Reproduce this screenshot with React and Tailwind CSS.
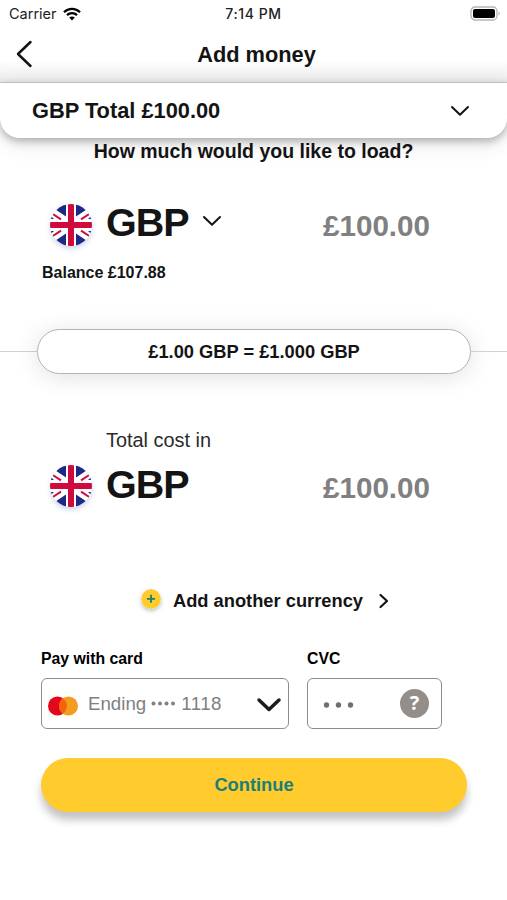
import React, { useState } from 'react';

const Chevron = ({ className, d, viewBox, width = 2 }) => (
    <svg className={className} viewBox={viewBox} fill="none" stroke="currentColor" strokeWidth={width} strokeLinecap="round" strokeLinejoin="round">
        <path d={d} />
    </svg>
);

const Flag = () => (
    <div className="h-[42px] w-[42px] shrink-0 overflow-hidden rounded-full shadow-[0_3px_5px_rgba(40,80,160,0.22)]">
        <svg className="block h-full w-full" viewBox="0 0 42 42">
            <rect width="42" height="42" fill="#fff" />
            <g fill="#1c2a86">
                <path d="M16 0V12.500L5.500 5.500L9 0ZM26 0V12.500L36.500 5.500L33 0Z" />
                <path d="M16 42V29.500L5.500 36.500L9 42ZM26 42V29.500L36.500 36.500L33 42Z" />
                <path d="M0 13.200L1.500 12.800L4 15H0ZM42 13.200L40.500 12.800L38 15H42Z" />
                <path d="M0 28.800L1.500 29.200L4 27H0ZM42 28.800L40.500 29.200L38 27H42Z" />
            </g>
            <g stroke="#cf0a3c" strokeWidth="2">
                <path d="M2 9.500L11 15.300M40 9.500L31 15.300M2 32.500L11 26.700M40 32.500L31 26.700" />
            </g>
            <path d="M18 0H24V18H42V24H24V42H18V24H0V18H18Z" fill="#cf0a3c" />
        </svg>
    </div>
);

const StatusBar = () => (
    <div className="grid h-7 grid-cols-3 items-center pr-[6px] pb-px pl-[9px] font-['Inter',sans-serif] text-[14.500px] text-[#222]">
        <div className="flex items-center gap-[6px]">
            <span className="font-normal">Carrier</span>
            <svg className="h-[14px] w-[18px] text-black" viewBox="0 0 18 14" fill="none" stroke="currentColor" strokeWidth="2.300">
                <path d="M1 5.200C5.500 0.700 12.500 0.700 17 5.200" />
                <path d="M4 8.200C6.800 5.500 11.200 5.500 14 8.200" />
                <path d="M9 13.500L6.200 10.600C7.800 9.200 10.200 9.200 11.800 10.600Z" fill="currentColor" stroke="none" />
            </svg>
        </div>
        <span className="pb-px pr-[3px] text-center text-[14px] font-medium tracking-[0.6px] whitespace-nowrap">7:14 PM</span>
        <svg className="h-[15px] w-[31px] justify-self-end" viewBox="0 0 31 15">
            <rect x="1" y="1" width="26" height="13" rx="4" fill="#fff" stroke="#b5b5b5" strokeWidth="1.300" />
            <rect x="3" y="3" width="22" height="9" rx="2" fill="#000" />
            <path d="M28.500 5.500C30.300 6.300 30.300 8.700 28.500 9.500Z" fill="#b5b5b5" />
        </svg>
    </div>
);

export default function AddMoney() {
    const [currency] = useState('GBP');
    const [amount] = useState('£100.00');

    return (
        <div className="h-[900px] w-[507px] overflow-hidden bg-white font-['Liberation_Sans',Arial,sans-serif] font-bold whitespace-nowrap text-[#141414]">
            <StatusBar />

            {/* Header */}
            <header className="grid h-[55px] grid-cols-[80px_1fr_74px] items-center border-b border-[#cfcecb] bg-linear-to-b from-white from-60% to-[#ebebeb]">
                <Chevron className="mb-[3px] ml-[15px] h-[28px] w-[18px]" viewBox="0 0 18 28" d="M15.500 2L3 14L15.500 26" width={2.500} />
                <h1 className="pb-px text-center text-[21.800px] leading-7">Add money</h1>
            </header>

            {/* Total */}
            <div className="relative flex h-[55px] items-center justify-between rounded-b-[20px] bg-white pr-[37px] pl-[32px] shadow-[0_3px_8px_rgba(0,0,0,0.28),0_6px_22px_rgba(0,0,0,0.10)]">
                <span className="pt-px text-[21.800px]">{currency} Total {amount}</span>
                <Chevron className="h-[12px] w-[20px]" viewBox="0 0 20 12" d="M2 2L10 9.800L18 2" />
            </div>

            <h2 className="h-[27px] text-center text-[19.500px] leading-[27px]">How much would you like to load?</h2>

            {/* Load amount */}
            <div className="mt-[35px] flex h-[50px] items-center pr-[77px] pl-[50px]">
                <Flag />
                <span className="ml-[14px] pb-[4px] text-[39.500px] leading-none tracking-[-1px]">{currency}</span>
                <Chevron className="mb-[9px] ml-[13px] h-[12px] w-[20px]" viewBox="0 0 20 12" d="M2 2L10 9.800L18 2" />
                <span className="ml-auto pt-[2px] text-[29.600px] leading-none text-[#808080]">{amount}</span>
            </div>
            <p className="mt-[11px] pl-[42px] text-[16px] leading-6">Balance £107.88</p>

            {/* Exchange rate */}
            <div className="mt-[44px] flex items-center">
                <div className="h-px w-[37px] bg-[#d2d2d2]" />
                <div className="flex h-[45px] w-[434px] items-center justify-center rounded-full border border-[#b5b5b5] bg-white text-[18.300px] shadow-[0_3px_24px_rgba(0,0,0,0.12)]">
                    £1.00 GBP = £1.000 GBP
                </div>
                <div className="h-px flex-1 bg-[#d2d2d2]" />
            </div>

            {/* Total cost */}
            <p className="mt-[54px] pl-[106px] text-[19.900px] leading-6 font-normal text-[#2b2b2b]">Total cost in</p>
            <div className="mt-[9px] flex h-[50px] items-center pr-[77px] pl-[50px]">
                <Flag />
                <span className="ml-[14px] pb-[2px] text-[39.500px] leading-none tracking-[-1px]">{currency}</span>
                <span className="ml-auto pt-[4px] text-[29.600px] leading-none text-[#808080]">{amount}</span>
            </div>

            <button className="mt-[78px] flex h-[24px] items-center pl-[141px]">
                <svg className="mb-[4px] h-[20px] w-[20px] rounded-full shadow-[0_2px_4px_rgba(0,0,0,0.25)]" viewBox="0 0 20 20">
                    <circle cx="10" cy="10" r="10" fill="#ffcb2d" />
                    <path d="M10 5.800V13.800M6 9.800H14" stroke="#16807a" strokeWidth="1.800" />
                </svg>
                <span className="ml-[12px] text-[18.300px]">Add another currency</span>
                <Chevron className="ml-[15px] h-[16px] w-[11px]" viewBox="0 0 11 16" d="M2.500 2L9 8L2.500 14" width={2.200} />
            </button>

            {/* Card */}
            <div className="mt-[34px] flex gap-[18px] pl-[41px] text-black">
                <div className="w-[248px]">
                    <label className="block text-[15.800px] leading-6">Pay with card</label>
                    <div className="mt-[7px] flex h-[51px] items-center rounded-[6px] border-[1.500px] border-[#8c8c8c] pr-[6px] pl-[6px] font-normal text-[#808080]">
                        <svg className="mt-[5px] h-[20px] w-[30px]" viewBox="0 0 30 20">
                            <circle cx="9.500" cy="10" r="9.500" fill="#e6061c" />
                            <circle cx="20.500" cy="10" r="9.500" fill="#f29d20" />
                            <path d="M15 2.250A9.500 9.500 0 0 1 15 17.750A9.500 9.500 0 0 1 15 2.250Z" fill="#f4640f" />
                        </svg>
                        <span className="ml-[10px] pt-px text-[18.700px]">Ending</span>
                        <svg className="ml-[5px] h-[5px] w-[25px]" viewBox="0 0 25 5" fill="currentColor">
                            <circle cx="2.500" cy="2.500" r="2" />
                            <circle cx="9" cy="2.500" r="2" />
                            <circle cx="15.500" cy="2.500" r="2" />
                            <circle cx="22" cy="2.500" r="2" />
                        </svg>
                        <span className="ml-[5px] pt-px text-[18.700px] tracking-[0.5px]">1118</span>
                        <Chevron className="mt-[3px] ml-auto h-[16px] w-[26px] text-[#1c1c1c]" viewBox="0 0 26 16" d="M3 3L13 12.500L23 3" width={3.500} />
                    </div>
                </div>
                <div className="w-[135px]">
                    <label className="block text-[15.800px] leading-6">CVC</label>
                    <div className="mt-[7px] flex h-[51px] items-center justify-between rounded-[6px] border-[1.500px] border-[#8c8c8c] pr-[12px] pl-[15px]">
                        <svg className="mt-[2px] h-[6px] w-[31px]" viewBox="0 0 31 6" fill="#6f6f6f">
                            <circle cx="3.500" cy="3" r="2.700" />
                            <circle cx="15.500" cy="3" r="2.700" />
                            <circle cx="27.500" cy="3" r="2.700" />
                        </svg>
                        <span className="mb-px flex h-[29px] w-[29px] items-center justify-center rounded-full bg-[#938e89] font-['Open_Sans',sans-serif] text-[20px] leading-none text-white">?</span>
                    </div>
                </div>
            </div>

            <button className="mt-[29px] ml-[41px] flex h-[54px] w-[426px] items-center justify-center rounded-full bg-[#ffcb2d] text-[18.300px] text-[#16807a] shadow-[0_8px_9px_rgba(0,0,0,0.24)]">
                Continue
            </button>
        </div>
    );
}
